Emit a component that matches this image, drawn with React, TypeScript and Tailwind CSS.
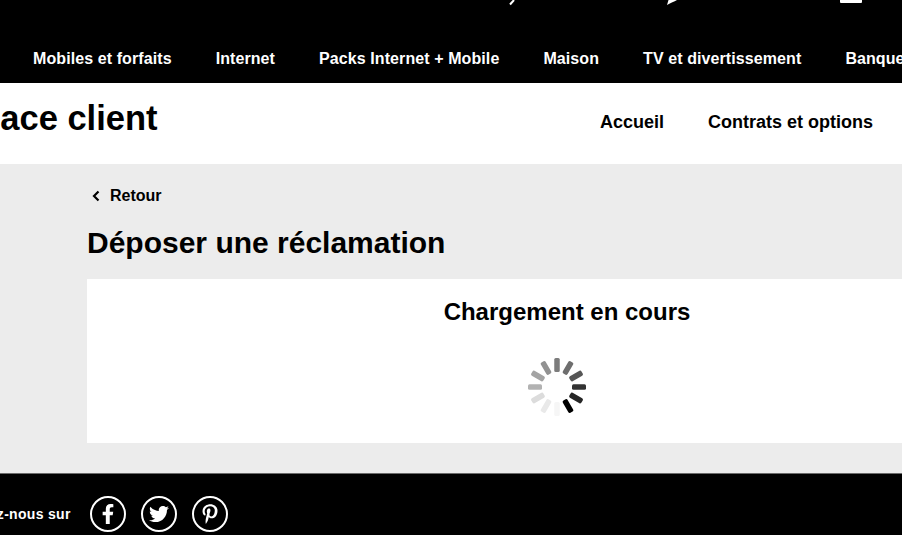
import { FaFacebookF, FaTwitter, FaPinterestP } from "react-icons/fa";

const navItems = ["Mobiles et forfaits", "Internet", "Packs Internet + Mobile", "Maison", "TV et divertissement", "Banque"];

const spinnerColors = ["#7c7c7c", "#6e6e6e", "#565656", "#333333", "#262626", "#000000", "#f6f6f6", "#e9e9e9", "#dcdcdc", "#b2b2b2", "#a4a4a4", "#929292"];

const Spinner = () => (
    <svg width="62" height="62" viewBox="0 0 62 62" className="block">
        {spinnerColors.map((color, i) => (
            <rect key={i} x="28.25" y="2" width="5.5" height="14" rx="1.5" fill={color} transform={`rotate(${i * 30} 31 31)`} />
        ))}
    </svg>
);

const TopGlyphs = () => (
    <div className="flex h-[6px] items-start pl-[509px]">
        <svg width="10" height="6" viewBox="0 0 10 6"><path d="M1 4.5 L5 0" stroke="#fff" strokeWidth="2" fill="none" /></svg>
        <svg width="14" height="6" viewBox="0 0 14 6" className="ml-[147px]"><path d="M1 5 L2.5 0 L11 0 C8 2 5 2.5 1 5 Z" fill="#fff" /></svg>
        <div className="ml-[160px] h-[3px] w-[22px] rounded-b-[1px] bg-white" />
    </div>
);

const socials = [FaFacebookF, FaTwitter, FaPinterestP];

export default function App() {
    return (
        <div className="h-[535px] w-[902px] overflow-hidden bg-white font-['Liberation_Sans',Arial,sans-serif] text-black">
            <header className="h-[83px] bg-black text-white">
                <TopGlyphs />
                <nav className="flex gap-[44px] whitespace-nowrap pl-[33px] pt-[44px] text-[16px] font-bold leading-[18px] tracking-[0.09px]">
                    {navItems.map((item) => (
                        <span key={item}>{item}</span>
                    ))}
                </nav>
            </header>

            <div className="flex h-[81px] whitespace-nowrap">
                <div className="ml-[-63px] w-[663px] pt-[15px] text-[34.5px] font-bold leading-[40px]">Espace client</div>
                <div className="flex gap-[44px] pt-[29px] text-[18px] font-bold leading-[20px]">
                    <span>Accueil</span>
                    <span>Contrats et options</span>
                </div>
            </div>

            <main className="h-[309px] bg-[#ececec] pl-[87px]">
                <div className="flex items-center gap-[10px] pl-[5px] pt-[23px] text-[16px] font-bold leading-[18px]">
                    <svg width="8" height="12" viewBox="0 0 8 12">
                        <path d="M6.5 1.5 L2 6 L6.5 10.5" stroke="#000" strokeWidth="2.2" fill="none" />
                    </svg>
                    <span>Retour</span>
                </div>
                <h1 className="mt-[20px] text-[30px] font-bold leading-[36px]">Déposer une réclamation</h1>
                <section className="mt-[18px] flex h-[164px] w-[960px] flex-col items-center bg-white pt-[19px]">
                    <h2 className="text-[24px] font-bold leading-[27px]">Chargement en cours</h2>
                    <div className="mt-[31px] ml-[-20px]">
                        <Spinner />
                    </div>
                </section>
            </main>

            <footer className="flex h-[62px] items-start whitespace-nowrap border-t border-[#6b6b6b] bg-black text-white">
                <span className="ml-[-42px] mt-[32px] text-[14px] font-bold leading-[16px] tracking-[0.3px]">Suivez-nous sur</span>
                <div className="ml-[19px] mt-[22px] flex gap-[15px]">
                    {socials.map((Icon, i) => (
                        <span key={i} className="flex h-[36px] w-[36px] items-center justify-center rounded-full border-2 border-white text-[20px]">
                            <Icon />
                        </span>
                    ))}
                </div>
            </footer>
        </div>
    );
}
